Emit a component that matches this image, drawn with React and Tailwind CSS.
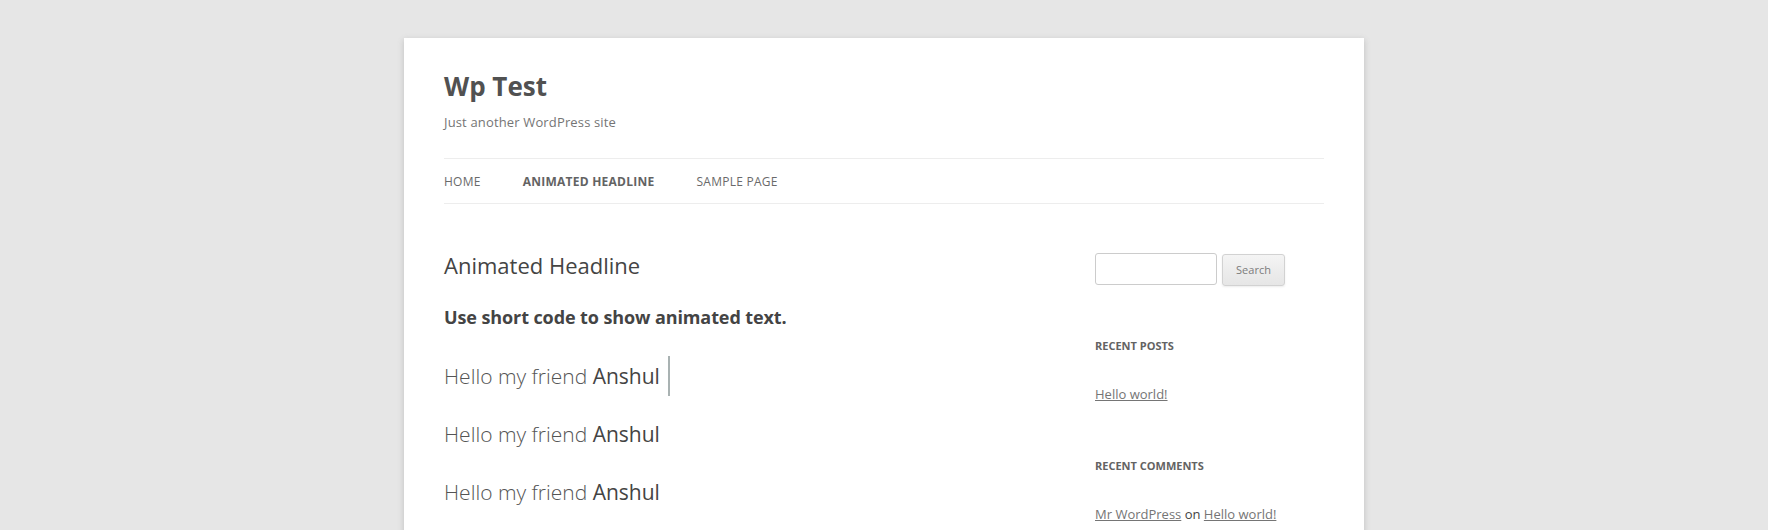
import React from "react";

const font = { fontFamily: '"Open Sans", "Liberation Sans", sans-serif' };

function HelloLine({ cursor }) {
  return (
    <div className="h-[58px] leading-[58px] text-[21px] text-[#444] whitespace-nowrap">
      <span className="font-light text-[#555]">Hello my friend </span>
      <span className="font-normal">Anshul</span>
      {cursor && <span className="inline-block w-[2px] h-[40px] ml-[8px] align-middle bg-[#a9b2b2] relative top-[-2px]" />}
    </div>
  );
}

export default function App() {
  return (
    <div className="min-h-screen bg-[#e6e6e6] pt-[38px]" style={font}>
      <div className="w-[960px] mx-auto bg-white px-[40px] pb-[60px] shadow-[0_2px_6px_rgba(100,100,100,0.3)]">
        {/* Header */}
        <header className="pt-[32px]">
          <h1 className="text-[26px] leading-[32px] font-bold text-[#515151]">Wp Test</h1>
          <p className="mt-[10px] text-[13px] leading-[20px] tracking-[0.15px] text-[#757575]">Just another WordPress site</p>
          <nav className="mt-[26px] border-t border-b border-[#ededed]">
            <ul className="flex text-[12px] leading-[43px] pt-[1px] uppercase tracking-[0.25px]">
              <li className="mr-[42px] text-[#6a6a6a]">Home</li>
              <li className="mr-[42px] text-[#636363] font-bold">Animated Headline</li>
              <li className="text-[#6a6a6a]">Sample Page</li>
            </ul>
          </nav>
        </header>

        {/* Main */}
        <div className="flex justify-between">
          <main className="w-[573px] pt-[47px]">
            <h2 className="text-[22px] leading-[28px] font-normal text-[#444]">Animated Headline</h2>
            <p className="mt-[26px] text-[18px] leading-[24px] font-bold tracking-[-0.1px] text-[#444]">Use short code to show animated text.</p>
            <div className="mt-[18px]">
              <HelloLine cursor />
              <HelloLine />
              <HelloLine />
            </div>
          </main>

          <aside className="w-[229px] pt-[49px]">
            <div className="flex gap-[5px]">
              <input
                type="text"
                className="w-[122px] h-[32px] border border-[#ccc] rounded-[3px] bg-white outline-none"
              />
              <button className="w-[63px] h-[32px] mt-[1px] text-[11px] text-[#7c7c7c] border border-[#d2d2d2] rounded-[3px] bg-gradient-to-b from-[#f4f4f4] to-[#e6e6e6] shadow-[0_1px_2px_rgba(64,64,64,0.1)]">
                Search
              </button>
            </div>

            <h3 className="mt-[52px] text-[11px] leading-[16px] font-bold uppercase text-[#636363]">Recent Posts</h3>
            <ul className="mt-[30px] text-[13px] leading-[20px]">
              <li><a className="text-[#757575] underline">Hello world!</a></li>
            </ul>

            <h3 className="mt-[54px] text-[11px] leading-[16px] font-bold uppercase text-[#636363]">Recent Comments</h3>
            <ul className="mt-[30px] text-[13px] leading-[20px]">
              <li className="text-[#444]">
                <a className="text-[#757575] underline">Mr WordPress</a> on{" "}
                <a className="text-[#757575] underline">Hello world!</a>
              </li>
            </ul>
          </aside>
        </div>
      </div>
    </div>
  );
}
